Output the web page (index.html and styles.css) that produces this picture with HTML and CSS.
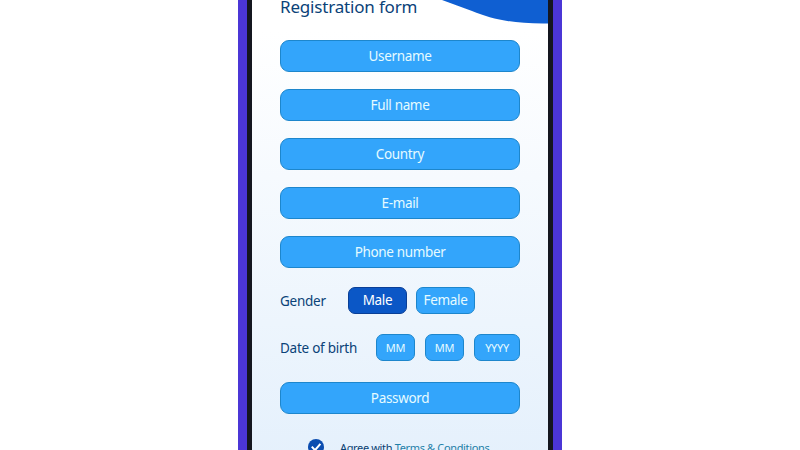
FILE: index.html
```html
<!DOCTYPE html>
<html lang="en">
<head>
  <meta charset="UTF-8">
  <meta name="viewport" content="width=device-width, initial-scale=1.0">
  <title>Registration form</title>
  <link rel="stylesheet" href="styles.css">
</head>
<body>
  <div class="phone">
    <div class="screen">
      <svg class="wave" width="106" height="24" viewBox="0 0 106 24">
        <path d="M0 0C10 4 20 7 30 11C50 19 70 24 106 23.5V0Z" fill="#0f5fd2"/>
      </svg>
      <h1 class="title">Registration form</h1>
      <div class="form">
        <div class="field">Username</div>
        <div class="field">Full name</div>
        <div class="field">Country</div>
        <div class="field">E-mail</div>
        <div class="field">Phone number</div>
        <div class="row gender-row">
          <span class="label gender-label">Gender</span>
          <div class="chip chip-on">Male</div>
          <div class="chip">Female</div>
        </div>
        <div class="row date-row">
          <span class="label date-label">Date of birth</span>
          <div class="chip chip-small mm">MM</div>
          <div class="chip chip-small mm">MM</div>
          <div class="chip chip-small yyyy">YYYY</div>
        </div>
        <div class="field">Password</div>
      </div>
      <div class="agree">
        <svg class="check" width="16" height="16" viewBox="0 0 16 16">
          <circle cx="8" cy="8" r="8" fill="#0b4db0"/>
          <path d="M3.8 7.6L7 11.2L12.4 4.8" fill="none" stroke="#fff" stroke-width="2"/>
        </svg>
        <span class="agree-text">Agree with <span class="terms">Terms &amp; Conditions</span></span>
      </div>
    </div>
  </div>
</body>
</html>
```

FILE: styles.css
```css
html, body {
  height: 100%;
}
body {
  margin: 0;
  background-color: #fff;
  overflow: hidden;
  font-family: "Noto Sans", "Open Sans", sans-serif;
}
.phone {
  width: 324px;
  height: 450px;
  box-sizing: border-box;
  margin: 0 auto;
  background-color: #4b36d6;
  padding: 0 9px;
  overflow: hidden;
}
.screen {
  position: relative;
  height: 520px;
  box-sizing: border-box;
  padding: 0 28px;
  background: linear-gradient(#fff 6%, #e4f0fc 90%);
  border-left: 5px solid #14161f;
  border-right: 5px solid #14161f;
}
.wave {
  position: absolute;
  top: 0;
  right: 0;
}
.title {
  margin: 0;
  height: 40px;
  font-size: 17px;
  font-weight: 400;
  line-height: 14px;
  letter-spacing: -0.18px;
  color: #0a4278;
}
.form {
  display: flex;
  flex-direction: column;
  gap: 17px;
}
.field, .chip {
  display: flex;
  align-items: center;
  justify-content: center;
  box-sizing: border-box;
  padding-bottom: 1px;
  border: 1px solid #1d86cc;
  background-color: #33a5fb;
  color: #e6fbff;
}
.field {
  height: 32px;
  border-radius: 9px;
  font-size: 13.5px;
  letter-spacing: -0.35px;
}
.row {
  display: flex;
  align-items: center;
  height: 27px;
}
.gender-row {
  margin-top: 2px;
}
.date-row {
  margin-top: 3px;
  margin-bottom: 4px;
}
.label {
  font-size: 13.5px;
  letter-spacing: -0.25px;
  color: #0a4278;
}
.gender-label {
  width: 68px;
}
.date-label {
  width: 96px;
}
.chip {
  height: 27px;
  width: 59px;
  margin-right: 9px;
  border-radius: 7px;
  font-size: 13.5px;
  letter-spacing: -0.3px;
}
.chip-on {
  background-color: #0b57c6;
  border-color: #0a3f96;
  color: #fff;
}
.chip-small {
  font-size: 11px;
}
.mm {
  width: 39px;
  margin-right: 10px;
}
.yyyy {
  width: 46px;
  margin-right: 0;
}
.agree {
  display: flex;
  align-items: center;
  margin-top: 25px;
  padding-left: 28px;
}
.agree-text {
  margin-left: 16px;
  font-size: 11px;
  letter-spacing: -0.35px;
  color: #0b3f72;
}
.terms {
  color: #1f7fa8;
}
```
